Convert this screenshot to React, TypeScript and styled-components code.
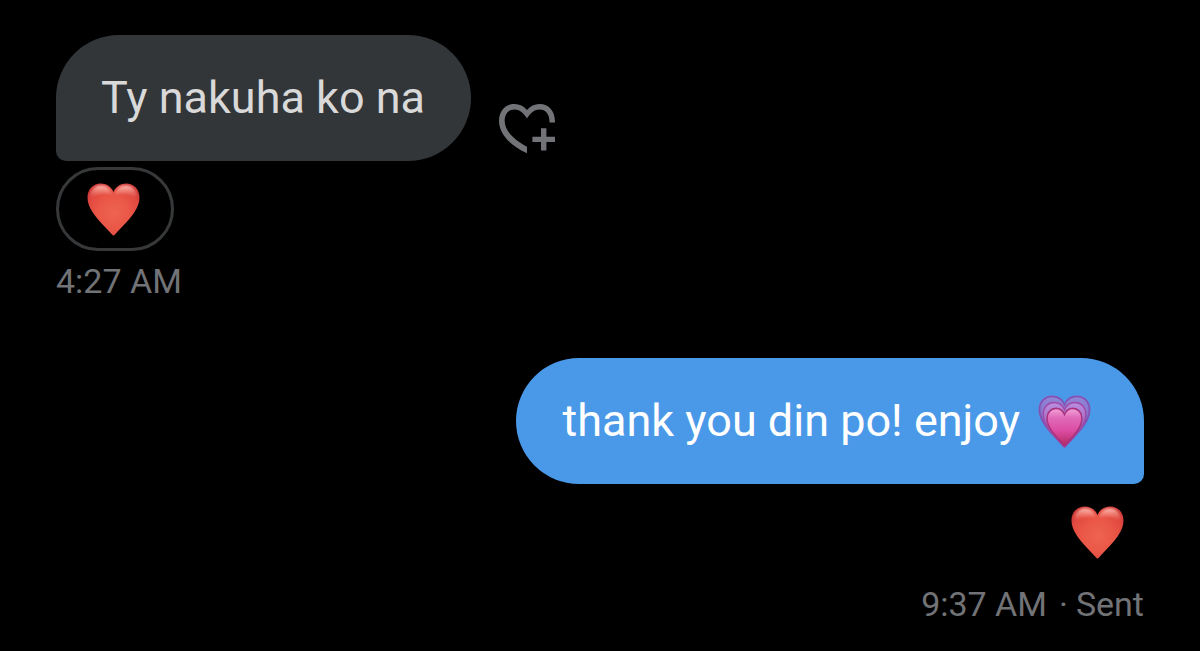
import React from "react";
import styled, { createGlobalStyle } from "styled-components";

const GlobalStyle = createGlobalStyle`
  *, *::before, *::after { box-sizing: border-box; }
  body {
    margin: 0;
    background: #000;
    color: #d9d9d9;
    font-family: Roboto, "Liberation Sans", sans-serif;
  }
  button {
    margin: 0;
    padding: 0;
    border: 0;
    background: none;
    font: inherit;
    color: inherit;
    cursor: pointer;
  }
`;

type Side = "received" | "sent";

const Conversation = styled.main`
  display: flex;
  flex-direction: column;
  gap: 57px;
  padding: 35px 56px 24px;
`;

const Message = styled.article<{ $side: Side }>`
  display: flex;
  flex-direction: column;
  align-items: ${(p) => (p.$side === "sent" ? "flex-end" : "flex-start")};
`;

const BubbleRow = styled.div`
  display: flex;
  align-items: flex-end;
  gap: 28px;
`;

const Bubble = styled.p<{ $side: Side }>`
  display: flex;
  align-items: center;
  gap: 18px;
  margin: 0;
  padding: ${(p) => (p.$side === "sent" ? "36px 53px 36px 46px" : "36px 46px 36px 45px")};
  border-radius: ${(p) =>
    p.$side === "sent" ? "63px 63px 10px 63px" : "63px 63px 63px 10px"};
  background: ${(p) => (p.$side === "sent" ? "#4a99e9" : "#333639")};
  color: ${(p) => (p.$side === "sent" ? "#fff" : "#d9d9d9")};
  font-size: 45px;
  line-height: 54px;
`;

const AddReaction = styled.button`
  && {
    display: flex;
    padding-bottom: 7px;
    color: #717377;
  }
`;

const Reaction = styled.button<{ $side: Side }>`
  && {
    display: flex;
    align-items: center;
    height: 84px;
    margin-top: 6px;
    padding: ${(p) => (p.$side === "sent" ? "0 20px" : "0 31px 0 28px")};
    border: ${(p) => (p.$side === "sent" ? "0" : "3px solid #36383a")};
    border-radius: 42px;
  }
`;

const Meta = styled.footer`
  display: flex;
  margin-top: 10px;
  color: #717377;
  font-size: 34px;
  line-height: 40px;
`;

const Dot = styled.span`
  margin: 0 8px 0 12px;
`;

function AddReactionIcon() {
  return (
    <svg width="56" height="50" viewBox="0 0 56 50" fill="currentColor" aria-hidden="true">
      <path d="M56 18.4V18C56 7 50 0 40.5 0C35.5 0 31 2 28 6C25 2 20.5 0 15.5 0C6 0 0 7.5 0 17C0 29 10 41 28 49.3V42.7C14 35 5.7 26.500 5.7 17C5.7 10 9.5 5.6 15.5 5.6C20.5 5.6 24 8.5 28 14.5C32 8.5 35.5 5.6 40.5 5.6C46.5 5.6 50.5 10 50.5 18V18.4Z" />
      <path d="M42 24.200h5.400v8.600H56v5.200h-8.600v8.600h-5.400v-8.600H33.400v-5.200H42z" />
    </svg>
  );
}

const HEART =
  "M26.5 52.5C26 52.5 25.500 52 25 51.500C18.500 44 10.500 37 5.800 29.500C2.200 24 0.500 19.500 0.500 14.500C0.500 6 6.500 0.500 13.700 0.500C19.500 0.500 24.300 3.600 26.500 9C28.700 3.600 33.500 0.500 39.300 0.500C46.500 0.500 52.500 6 52.500 14.500C52.500 19.500 50.800 24 47.200 29.500C42.500 37 34.500 44 28 51.500C27.500 52 27 52.500 26.500 52.500Z";

function RedHeart({ id }: { id: string }) {
  return (
    <svg width="53" height="53" viewBox="0 0 53 53" role="img" aria-label="Red heart">
      <defs>
        <radialGradient id={`${id}-body`} gradientUnits="userSpaceOnUse" cx="26.5" cy="30" r="32">
          <stop offset="0" stopColor="#ee6450" />
          <stop offset="0.5" stopColor="#ea5747" />
          <stop offset="0.8" stopColor="#e24a40" />
          <stop offset="1" stopColor="#cf3a38" />
        </radialGradient>
        <linearGradient id={`${id}-gloss`} x1="0" y1="0" x2="0" y2="1">
          <stop offset="0" stopColor="#ffc9c0" stopOpacity="0.95" />
          <stop offset="1" stopColor="#f4705f" stopOpacity="0" />
        </linearGradient>
        <filter id={`${id}-soft`} x="-20%" y="-20%" width="140%" height="140%">
          <feGaussianBlur stdDeviation="1" />
        </filter>
      </defs>
      <path d={HEART} fill={`url(#${id}-body)`} />
      <g fill={`url(#${id}-gloss)`} filter={`url(#${id}-soft)`}>
        <path d="M3 16C3 7 8 2.500 14 2.500C19.500 2.500 23.500 5.500 25.500 12C20 10 8 10 3 16Z" />
        <path d="M50 16C50 7 45 2.500 39 2.500C33.500 2.500 29.500 5.500 27.500 12C33 10 45 10 50 16Z" />
      </g>
    </svg>
  );
}

function GrowingHeart() {
  return (
    <svg width="53" height="53" viewBox="0 0 53 53" role="img" aria-label="Growing heart">
      <defs>
        <linearGradient id="grow-outer" x1="0" y1="0" x2="0" y2="1">
          <stop offset="0" stopColor="#9286d8" />
          <stop offset="0.6" stopColor="#8068c4" />
          <stop offset="1" stopColor="#a04097" />
        </linearGradient>
        <linearGradient id="grow-middle" x1="0" y1="0" x2="0" y2="1">
          <stop offset="0" stopColor="#b98fe0" />
          <stop offset="0.6" stopColor="#a05cb8" />
          <stop offset="1" stopColor="#b0367f" />
        </linearGradient>
        <linearGradient id="grow-inner" x1="0" y1="0" x2="0" y2="1">
          <stop offset="0" stopColor="#f3a5da" />
          <stop offset="0.250" stopColor="#e06ab8" />
          <stop offset="0.600" stopColor="#dc4ba2" />
          <stop offset="1" stopColor="#b02a62" />
        </linearGradient>
      </defs>
      <path d={HEART} fill="url(#grow-outer)" />
      <path
        d={HEART}
        transform="translate(1 0.8) scale(0.962 0.966)"
        fill="none"
        stroke="#8052b4"
        strokeWidth="1.800"
      />
      <path
        d={HEART}
        transform="translate(4.800 7) scale(0.820 0.850)"
        fill="url(#grow-middle)"
        stroke="#a04aa8"
        strokeWidth="1.800"
      />
      <path
        d={HEART}
        transform="translate(8.700 13) scale(0.670 0.720)"
        fill="url(#grow-inner)"
        stroke="#a8327e"
        strokeWidth="2.200"
      />
    </svg>
  );
}

export default function App() {
  return (
    <>
      <GlobalStyle />
      <Conversation>
        <Message $side="received">
          <BubbleRow>
            <Bubble $side="received">Ty nakuha ko na</Bubble>
            <AddReaction type="button" aria-label="Add reaction">
              <AddReactionIcon />
            </AddReaction>
          </BubbleRow>
          <Reaction $side="received" type="button">
            <RedHeart id="received-heart" />
          </Reaction>
          <Meta>
            <time>4:27 AM</time>
          </Meta>
        </Message>
        <Message $side="sent">
          <Bubble $side="sent">
            <span>thank you din po! enjoy</span>
            <GrowingHeart />
          </Bubble>
          <Reaction $side="sent" type="button">
            <RedHeart id="sent-heart" />
          </Reaction>
          <Meta>
            <time>9:37 AM</time>
            <Dot>·</Dot>
            <span>Sent</span>
          </Meta>
        </Message>
      </Conversation>
    </>
  );
}
